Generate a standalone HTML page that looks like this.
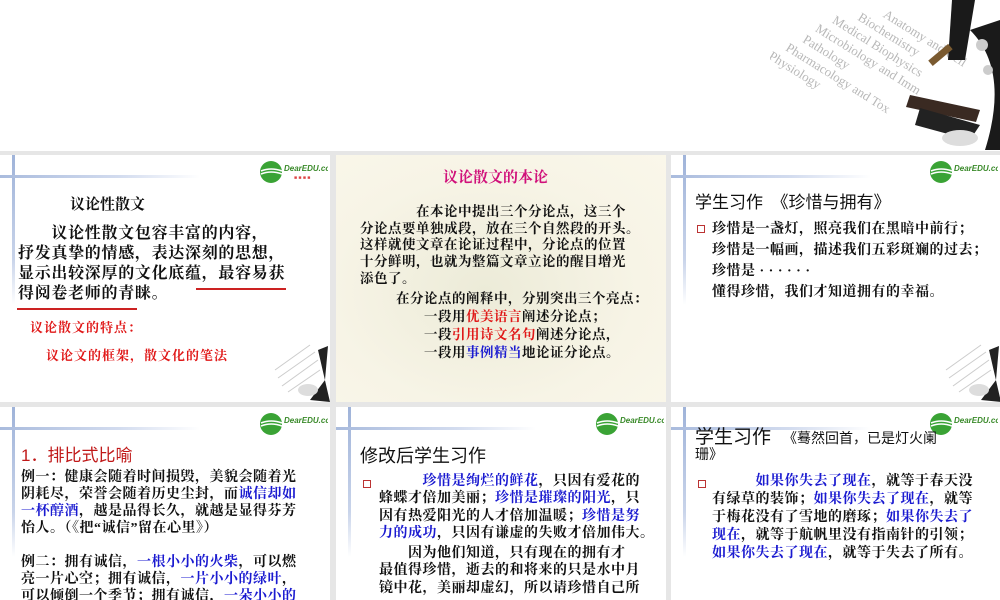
<!DOCTYPE html>
<html><head><meta charset="utf-8"><style>
*{margin:0;padding:0;box-sizing:border-box}
body{width:1000px;height:600px;overflow:hidden;background:#e6e6e6;position:relative;font-family:"Liberation Serif","Noto Serif CJK SC",serif}
.top{position:absolute;left:0;top:0;width:1000px;height:151px;background:#fff;overflow:hidden}
.p{position:absolute;background:#fff;overflow:hidden}
.vl{position:absolute;left:12px;top:0;width:3px;height:150px;background:linear-gradient(#9fb3d9,#c9d4ea 70%,rgba(255,255,255,0))}
.hl{position:absolute;left:0;top:20px;width:200px;height:3px;background:linear-gradient(90deg,#a9bbdd,#d3dcef 60%,rgba(255,255,255,0))}
.logo{position:absolute;right:2px;top:5px;width:70px;height:24px}
.t{position:absolute;font-weight:bold;color:#111;white-space:nowrap}
.s{font-family:"Liberation Sans","Noto Sans CJK SC",sans-serif;font-weight:normal}
.r{color:#e01818}.b{color:#1a1ad0}.m{color:#d0107a}
.bx{position:absolute;width:8px;height:8px;border:1.3px solid #b33}
.mic{position:absolute}
.body{font-size:14px;letter-spacing:0.5px}
</style></head><body>
<div class="top">
<svg class="mic" style="left:770px;top:0" width="230" height="150">
<g fill="#b8b8b8" font-family="Liberation Serif" font-size="13">
<g transform="translate(70,-10) rotate(32)">
<text x="50" y="0">Anatomy and Cell</text><text x="30" y="16">Biochemistry</text><text x="10" y="32">Medical Biophysics</text><text x="0" y="48">Microbiology and Imm</text><text x="-5" y="64">Pathology</text><text x="-15" y="80">Pharmacology and Tox</text><text x="-25" y="96">Physiology</text></g></g>
<path d="M182 0 L205 0 L195 60 L178 60Z" fill="#1a1a1a"/>
<path d="M200 30 Q240 70 215 150 L230 150 L230 20 Z" fill="#1a1a1a"/>
<circle cx="212" cy="45" r="6" fill="#ccc"/><circle cx="218" cy="70" r="5" fill="#ccc"/>
<path d="M140 95 L210 110 L206 122 L136 107Z" fill="#3a2a22"/>
<path d="M150 108 L210 125 L200 140 L145 125Z" fill="#222"/>
<rect x="158" y="52" width="26" height="7" fill="#7a5a30" transform="rotate(-40 170 56)"/>
<ellipse cx="190" cy="138" rx="18" ry="8" fill="#ddd"/>
</svg>
</div>

<!-- panel 1 -->
<div class="p" style="left:0;top:155px;width:330px;height:247px">
<div class="vl"></div><div class="hl"></div>
<svg class="logo" viewBox="0 0 70 24"><circle cx="13" cy="12" r="11" fill="#3aa335"/><path d="M3 11 Q13 7 24 11 M3 14 Q13 10 24 14" stroke="#fff" stroke-width="1.5" fill="none"/><text x="26" y="11" font-size="8" font-weight="bold" fill="#3a8a2a" font-family="Liberation Sans" font-style="italic">DearEDU.com</text><text x="36" y="19" font-size="5" fill="#d44" font-family="Liberation Sans">■ ■ ■ ■</text></svg>
<div class="t" style="left:70px;top:38px;font-size:15px">议论性散文</div>
<div class="t" style="left:18px;top:69px;font-size:16px;letter-spacing:0.7px;line-height:20px">　　议论性散文包容丰富的内容，<br>抒发真挚的情感，表达深刻的思想，<br>显示出较深厚的文化底蕴，最容易获<br>得阅卷老师的青睐。</div>
<div style="position:absolute;left:196px;top:133px;width:90px;height:2px;background:#c22"></div>
<div style="position:absolute;left:17px;top:153px;width:120px;height:2px;background:#c22"></div>
<div class="t r" style="left:30px;top:162px;font-size:13px;letter-spacing:1px">议论散文的特点：</div>
<div class="t r" style="left:46px;top:190px;font-size:13px;letter-spacing:1px">议论文的框架，散文化的笔法</div>
<svg class="mic" style="left:270px;top:185px" width="60" height="62"><g stroke="#ccc" stroke-width="1"><path d="M5 30 L40 5 M8 38 L45 12 M12 46 L48 20 M18 52 L50 30"/></g><path d="M48 10 L58 6 L55 40 L40 60 L60 62Z" fill="#222"/><ellipse cx="38" cy="50" rx="10" ry="6" fill="#ddd"/></svg>
</div>

<!-- panel 2 -->
<div class="p" style="left:336px;top:155px;width:330px;height:247px;background:radial-gradient(ellipse at 45% 55%,#ecebd8,#f7f4e6 60%,#faf7ea)">
<div class="t m" style="left:107px;top:11px;font-size:15px">议论散文的本论</div>
<div class="t body" style="left:24px;top:49px;font-size:13.5px;line-height:16.7px">　　　　在本论中提出三个分论点，这三个<br>分论点要单独成段，放在三个自然段的开头。<br>这样就使文章在论证过程中，分论点的位置<br>十分鲜明，也就为整篇文章立论的醒目增光<br>添色了。</div>
<div class="t body" style="left:60px;top:136px;font-size:13.5px;line-height:16.7px">在分论点的阐释中，分别突出三个亮点：</div>
<div class="t body" style="left:88px;top:153px;font-size:13.5px;line-height:18px">一段用<span class="r">优美语言</span>阐述分论点；<br>一段<span class="r">引用诗文名句</span>阐述分论点，<br>一段用<span class="b">事例精当</span>地论证分论点。</div>
</div>

<!-- panel 3 -->
<div class="p" style="left:671px;top:155px;width:329px;height:247px">
<div class="vl"></div><div class="hl"></div>
<svg class="logo" viewBox="0 0 70 24"><circle cx="13" cy="12" r="11" fill="#3aa335"/><path d="M3 11 Q13 7 24 11 M3 14 Q13 10 24 14" stroke="#fff" stroke-width="1.5" fill="none"/><text x="26" y="11" font-size="8" font-weight="bold" fill="#3a8a2a" font-family="Liberation Sans" font-style="italic">DearEDU.com</text></svg>
<div class="t s" style="left:24px;top:33px;font-size:17px">学生习作　《珍惜与拥有》</div>
<div class="bx" style="left:26px;top:70px"></div>
<div class="t body" style="left:41px;top:64px;line-height:21px">珍惜是一盏灯，照亮我们在黑暗中前行；<br>珍惜是一幅画，描述我们五彩斑斓的过去；<br>珍惜是 · · · · · ·<br>懂得珍惜，我们才知道拥有的幸福。</div>
<svg class="mic" style="left:270px;top:185px" width="60" height="62"><g stroke="#ccc" stroke-width="1"><path d="M5 30 L40 5 M8 38 L45 12 M12 46 L48 20 M18 52 L50 30"/></g><path d="M48 10 L58 6 L55 40 L40 60 L60 62Z" fill="#222"/><ellipse cx="38" cy="50" rx="10" ry="6" fill="#ddd"/></svg>
</div>

<!-- panel 4 -->
<div class="p" style="left:0;top:407px;width:330px;height:193px">
<div class="vl"></div><div class="hl"></div>
<svg class="logo" viewBox="0 0 70 24"><circle cx="13" cy="12" r="11" fill="#3aa335"/><path d="M3 11 Q13 7 24 11 M3 14 Q13 10 24 14" stroke="#fff" stroke-width="1.5" fill="none"/><text x="26" y="11" font-size="8" font-weight="bold" fill="#3a8a2a" font-family="Liberation Sans" font-style="italic">DearEDU.com</text></svg>
<div class="t s" style="left:21px;top:38px;font-size:17px;line-height:22px;color:#c01818">1．排比式比喻</div>
<div class="t body" style="left:21px;top:62px;line-height:17px">例一：健康会随着时间损毁，美貌会随着光<br>阴耗尽，荣誉会随着历史尘封，而<span class="b">诚信却如</span><br><span class="b">一杯醇酒</span>，越是品得长久，就越是显得芬芳<br>怡人。（《把“诚信”留在心里》）<br><br>例二：拥有诚信，<span class="b">一根小小的火柴</span>，可以燃<br>亮一片心空；拥有诚信，<span class="b">一片小小的绿叶</span>，<br>可以倾倒一个季节；拥有诚信，<span class="b">一朵小小的</span></div>
</div>

<!-- panel 5 -->
<div class="p" style="left:336px;top:407px;width:330px;height:193px">
<div class="vl"></div><div class="hl"></div>
<svg class="logo" viewBox="0 0 70 24"><circle cx="13" cy="12" r="11" fill="#3aa335"/><path d="M3 11 Q13 7 24 11 M3 14 Q13 10 24 14" stroke="#fff" stroke-width="1.5" fill="none"/><text x="26" y="11" font-size="8" font-weight="bold" fill="#3a8a2a" font-family="Liberation Sans" font-style="italic">DearEDU.com</text></svg>
<div class="t s" style="left:24px;top:35px;font-size:18px">修改后学生习作</div>
<div class="bx" style="left:27px;top:73px"></div>
<div class="t body" style="left:43px;top:66px;line-height:17.3px">　　　<span class="b">珍惜是绚烂的鲜花</span>，只因有爱花的<br>蜂蝶才倍加美丽；<span class="b">珍惜是璀璨的阳光</span>，只<br>因有热爱阳光的人才倍加温暖；<span class="b">珍惜是努</span><br><span class="b">力的成功</span>，只因有谦虚的失败才倍加伟大。</div>
<div class="t body" style="left:43px;top:138px;line-height:17.3px">　　因为他们知道，只有现在的拥有才<br>最值得珍惜，逝去的和将来的只是水中月<br>镜中花，美丽却虚幻，所以请珍惜自己所</div>
</div>

<!-- panel 6 -->
<div class="p" style="left:671px;top:407px;width:329px;height:193px">
<div class="vl"></div><div class="hl"></div>
<svg class="logo" viewBox="0 0 70 24"><circle cx="13" cy="12" r="11" fill="#3aa335"/><path d="M3 11 Q13 7 24 11 M3 14 Q13 10 24 14" stroke="#fff" stroke-width="1.5" fill="none"/><text x="26" y="11" font-size="8" font-weight="bold" fill="#3a8a2a" font-family="Liberation Sans" font-style="italic">DearEDU.com</text></svg>
<div class="t s" style="left:24px;top:15px;font-size:19px">学生习作　<span style="font-size:14px">《蓦然回首，已是灯火阑</span></div>
<div class="t s" style="left:24px;top:37px;font-size:14px">珊》</div>
<div class="bx" style="left:27px;top:73px"></div>
<div class="t body" style="left:41px;top:66px;line-height:18px">　　　<span class="b">如果你失去了现在</span>，就等于春天没<br>有绿草的装饰；<span class="b">如果你失去了现在</span>，就等<br>于梅花没有了雪地的磨琢；<span class="b">如果你失去了</span><br><span class="b">现在</span>，就等于航帆里没有指南针的引领；<br><span class="b">如果你失去了现在</span>，就等于失去了所有。</div>
</div>
</body></html>
